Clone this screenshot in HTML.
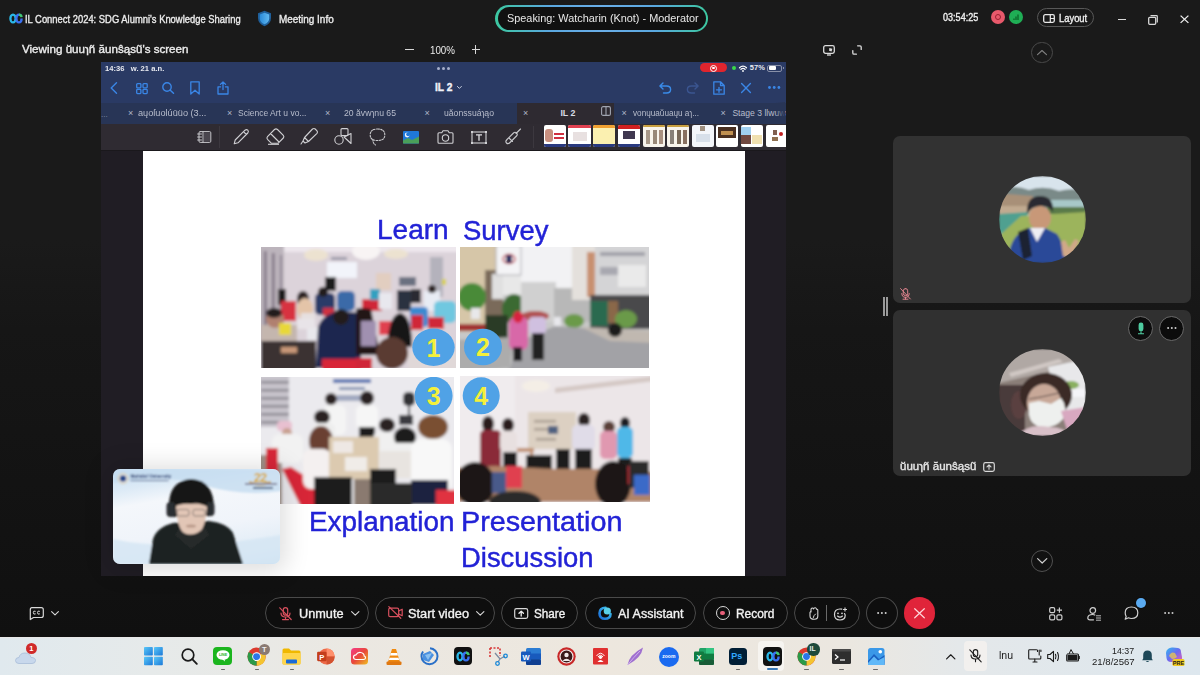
<!DOCTYPE html>
<html><head><meta charset="utf-8">
<style>
*{margin:0;padding:0;box-sizing:border-box}
html,body{width:1200px;height:675px;overflow:hidden}
body{position:relative;font-family:"Liberation Sans",sans-serif;background:linear-gradient(#1a1a1a 0,#1a1a1a 240px,#161616 330px,#111 585px,#101010 637px);color:#eee}
.a{position:absolute}
.t{position:absolute;white-space:nowrap;line-height:1;transform-origin:0 0}
.sb{-webkit-text-stroke:0.35px currentColor}
.pill{position:absolute;border:1.3px solid #4a4a4a;border-radius:17px;background:#0e0e0e;top:597px;height:32px}
svg{position:absolute;overflow:visible}
.ln{fill:none;stroke-linecap:round;stroke-linejoin:round}
</style></head><body>

<!-- ===== TOP BAR ===== -->
<svg style="left:9px;top:12.5px" width="14" height="11" viewBox="0 0 14 11">
  <ellipse cx="4" cy="5.5" rx="2.6" ry="3.9" fill="none" stroke="#2ab8e8" stroke-width="2.3"/>
  <path d="M12.2 2.8 Q11.2 1.6 10 1.6 Q7.4 1.6 7.4 5.5 Q7.4 9.4 10 9.4 Q12.6 9.4 12.6 5.5" fill="none" stroke="#3a70f0" stroke-width="2.3"/>
  <path d="M10 1.6 Q12.4 1.6 12.6 4.2" fill="none" stroke="#40c870" stroke-width="2.3"/>
</svg>
<div class="t sb" style="left:25px;top:13.6px;font-size:10.5px;color:#ececec;transform:scaleX(0.895)">IL Connect 2024: SDG Alumni's Knowledge Sharing</div>
<svg style="left:257px;top:10px" width="15" height="17" viewBox="0 0 15 17">
  <defs><linearGradient id="sh" x1="0" x2="1"><stop offset="0" stop-color="#2a8ad8"/><stop offset="1" stop-color="#60b8f0"/></linearGradient></defs>
  <path d="M7.5 0.8 L14 3.2 L14 8 Q14 13.5 7.5 16.2 Q1 13.5 1 8 L1 3.2 Z" fill="#1f5f9a"/>
  <path d="M7.5 2.8 L12.2 4.5 L12.2 8.2 Q12.2 12.3 7.5 14.3 Q2.8 12.3 2.8 8.2 L2.8 4.5 Z" fill="url(#sh)"/>
</svg>
<div class="t sb" style="left:279px;top:13.8px;font-size:10.5px;color:#ececec;transform:scaleX(0.946)">Meeting Info</div>

<div class="a" style="left:495px;top:4.5px;width:213px;height:27.5px;border-radius:14px;padding:2.5px;background:linear-gradient(90deg,#3cc8a0 0,#5aa8e0 25%,#6aaee8 50%,#5aa8e0 75%,#3cc8a0 100%)"><div style="width:100%;height:100%;border-radius:12px;background:#111"></div></div>
<div class="t" style="left:506.8px;top:13.3px;font-size:10.5px;color:#e8e8e8;transform:scaleX(1.035)">Speaking: Watcharin (Knot) - Moderator</div>

<div class="t sb" style="left:943px;top:13.2px;font-size:10.2px;color:#f0f0f0;transform:scaleX(0.89)">03:54:25</div>
<div class="a" style="left:990.6px;top:10.4px;width:14px;height:14px;border-radius:50%;background:#e8596b"></div>
<div class="a" style="left:994.6px;top:14.4px;width:6px;height:6px;border-radius:50%;border:1.4px solid #9a2030"></div>
<div class="a" style="left:1009.4px;top:10.4px;width:14px;height:14px;border-radius:50%;background:#1fae55"></div>
<svg style="left:1009.4px;top:10.4px" width="14" height="14"><path d="M5 10 V8.5 M7 10 V6.5 M9 10 V4.5" stroke="#0a6a2a" stroke-width="1.4"/></svg>
<div class="a" style="left:1036.5px;top:8.3px;width:57.5px;height:18.7px;border-radius:10px;border:1.2px solid #585858"></div>
<svg style="left:1043px;top:13.5px" width="12" height="9"><rect x="0.7" y="0.7" width="10.6" height="7.6" rx="1.5" fill="none" stroke="#e8e8e8" stroke-width="1.3"/><path d="M7.3 0.7 V8.3 M7.3 4.5 H11.3" stroke="#e8e8e8" stroke-width="1.2"/></svg>
<div class="t sb" style="left:1058.8px;top:13.7px;font-size:10.2px;color:#f0f0f0;transform:scaleX(0.922)">Layout</div>
<div class="a" style="left:1117.5px;top:19.2px;width:8.5px;height:1.3px;background:#d8d8d8"></div>
<svg style="left:1147.5px;top:14.5px" width="10" height="10"><rect x="0.7" y="2.3" width="7" height="7" rx="1" fill="none" stroke="#d8d8d8" stroke-width="1.3"/><path d="M2.5 0.7 H8.6 Q9.3 0.7 9.3 1.4 V7.5" fill="none" stroke="#d8d8d8" stroke-width="1.2"/></svg>
<svg style="left:1179.5px;top:14.7px" width="9" height="8.5"><path d="M0.6 0.6 L8.4 7.9 M8.4 0.6 L0.6 7.9" stroke="#f0f0f0" stroke-width="1.3"/></svg>

<!-- ===== second row ===== -->
<div class="t sb" style="left:22px;top:44px;font-size:10.5px;color:#ececec;transform:scaleX(1.105)">Viewing ŭuuɿñ ăunŝąsũ's screen</div>
<div class="a" style="left:405px;top:48.8px;width:8.7px;height:1.2px;background:#d8d8d8"></div>
<div class="t" style="left:430px;top:44.7px;font-size:10.8px;color:#ececec;transform:scaleX(0.905)">100%</div>
<div class="a" style="left:471.7px;top:48.8px;width:8.4px;height:1.2px;background:#d8d8d8"></div>
<div class="a" style="left:475.3px;top:45.2px;width:1.2px;height:8.5px;background:#d8d8d8"></div>
<svg style="left:823px;top:44.5px" width="12" height="11"><rect x="0.7" y="0.7" width="10.6" height="7.6" rx="1.8" fill="none" stroke="#dcdcdc" stroke-width="1.3"/><path d="M4 10 H8" stroke="#dcdcdc" stroke-width="1.3"/><path d="M6.3 3 L9.3 3.8 L8.6 6.6 L6.1 5.8Z" fill="#dcdcdc"/></svg>
<svg style="left:852px;top:44.5px" width="10" height="10"><path d="M5.6 0.8 H8 Q9.2 0.8 9.2 2 V4.4 M0.8 5.6 V8 Q0.8 9.2 2 9.2 H4.4" class="ln" stroke="#dcdcdc" stroke-width="1.3"/></svg>
<div class="a" style="left:1031.4px;top:41.8px;width:21.6px;height:21.6px;border-radius:50%;border:1.2px solid #4a4a4a"></div>
<svg style="left:1037px;top:50px" width="10" height="5"><path d="M0.5 4.7 L5 0.5 L9.5 4.7" class="ln" stroke="#808080" stroke-width="1.1"/></svg>

<!-- ===== SHARED SCREEN ===== -->
<div class="a" id="ipad" style="left:101px;top:62px;width:684.5px;height:513.7px;background:#201d24;overflow:hidden">
  <div class="a" style="left:0;top:0;width:685px;height:40.5px;background:#2a3a64"></div>
  <div class="a" style="left:0;top:40.5px;width:685px;height:21.5px;background:#283556"></div>
  <div class="a" style="left:416px;top:40.5px;width:97px;height:22px;background:#2e2a31"></div>
  <div class="a" style="left:0;top:62px;width:685px;height:26px;background:#2f2b32"></div><div class="a" style="left:0;top:88px;width:685px;height:1px;background:#1a181c"></div>
  <!-- page -->
  <div class="a" id="page" style="left:41.8px;top:89px;width:602.5px;height:426px;background:#fff"></div>
</div>
<!-- ipad status bar -->
<div class="t" style="left:104.5px;top:64.7px;font-size:7.2px;font-weight:700;color:#e8eaf0;transform:scaleX(1.057)">14:36&nbsp;&nbsp; w. 21 a.n.</div>
<svg style="left:437px;top:66.5px" width="13" height="3"><circle cx="1.5" cy="1.5" r="1.5" fill="#a8b0cc"/><circle cx="6.5" cy="1.5" r="1.5" fill="#a8b0cc"/><circle cx="11.5" cy="1.5" r="1.5" fill="#a8b0cc"/></svg>
<div class="a" style="left:699.6px;top:63px;width:27.4px;height:9.3px;border-radius:5px;background:#e0252e"></div>
<div class="a" style="left:710px;top:64.5px;width:7px;height:7px;border-radius:50%;border:1.2px solid #fff"></div>
<div class="a" style="left:712.3px;top:66.8px;width:2.4px;height:2.4px;border-radius:50%;background:#fff"></div>
<div class="a" style="left:731.5px;top:65.7px;width:4.6px;height:4.6px;border-radius:50%;background:#3ad84a"></div>
<svg style="left:738.7px;top:64.5px" width="8" height="7"><path d="M0.5 2.8 Q4 -0.6 7.5 2.8 M1.9 4.3 Q4 2.3 6.1 4.3" class="ln" stroke="#fff" stroke-width="1.2"/><circle cx="4" cy="6" r="0.9" fill="#fff"/></svg>
<div class="t" style="left:749.8px;top:64.3px;font-size:7.5px;font-weight:700;color:#e8eaf0">57%</div>
<div class="a" style="left:767.3px;top:64.5px;width:15px;height:7px;border-radius:2px;border:1px solid #8890a8"></div>
<div class="a" style="left:768.8px;top:66px;width:7.5px;height:4px;border-radius:1px;background:#fff"></div>
<div class="a" style="left:782.6px;top:66.8px;width:1.2px;height:2.5px;background:#8890a8"></div>
<!-- ipad toolbar icons -->
<svg style="left:110px;top:82px" width="8" height="12"><path d="M6.5 0.8 L1.2 6 L6.5 11.2" class="ln" stroke="#3a86e6" stroke-width="1.4"/></svg>
<svg style="left:135.5px;top:82.5px" width="12" height="11"><g fill="none" stroke="#3a86e6" stroke-width="1.3"><rect x="0.7" y="0.7" width="4.2" height="4.2" rx="0.8"/><rect x="7" y="0.7" width="4.2" height="4.2" rx="0.8"/><rect x="0.7" y="6.4" width="4.2" height="4.2" rx="0.8"/><rect x="7" y="6.4" width="4.2" height="4.2" rx="0.8"/></g></svg>
<svg style="left:161.8px;top:82px" width="13" height="12"><circle cx="5" cy="5" r="4.2" fill="none" stroke="#3a86e6" stroke-width="1.4"/><path d="M8 8 L11.5 11.3" class="ln" stroke="#3a86e6" stroke-width="1.5"/></svg>
<svg style="left:190.4px;top:81px" width="10" height="14"><path d="M0.8 0.8 H9.2 V13 L5 9.3 L0.8 13 Z" class="ln" stroke="#3a86e6" stroke-width="1.3"/></svg>
<svg style="left:216.7px;top:80.5px" width="12" height="14"><path d="M3.6 5.8 H1 V13 H11 V5.8 H8.4 M6 8.5 V0.9 M3.4 3.4 L6 0.9 L8.6 3.4" class="ln" stroke="#3a86e6" stroke-width="1.3"/></svg>
<div class="t sb" style="left:435px;top:83.3px;font-size:10.2px;font-weight:700;color:#f0f2f8">IL 2</div>
<svg style="left:457px;top:86.3px" width="5" height="3"><path d="M0.4 0.4 L2.4 2.4 L4.4 0.4" class="ln" stroke="#c8d0e0" stroke-width="1"/></svg>
<svg style="left:658.8px;top:82px" width="13" height="12"><path d="M4 0.9 L0.9 4 L4 7.1 M1 4 H7.5 Q11.6 4 11.6 7.5 Q11.6 11 7.5 11 H4.5" class="ln" stroke="#3a8be8" stroke-width="1.4"/></svg>
<svg style="left:685.6px;top:82px" width="13" height="12"><path d="M9 0.9 L12.1 4 L9 7.1 M12 4 H5.5 Q1.4 4 1.4 7.5 Q1.4 11 5.5 11 H8.5" class="ln" stroke="#3b5590" stroke-width="1.4"/></svg>
<svg style="left:713px;top:80.5px" width="12" height="14"><path d="M0.8 0.8 H7.5 L11.2 4.5 V13.2 H0.8 Z M7.5 0.8 V4.5 H11.2 M6 6.3 V11.3 M3.5 8.8 H8.5" class="ln" stroke="#3a86e6" stroke-width="1.3"/></svg>
<svg style="left:741px;top:82.7px" width="10" height="10"><path d="M0.6 0.6 L9.4 9.4 M9.4 0.6 L0.6 9.4" class="ln" stroke="#3a86e6" stroke-width="1.4"/></svg>
<svg style="left:767.5px;top:86.3px" width="13" height="3"><circle cx="1.5" cy="1.5" r="1.4" fill="#3a86e6"/><circle cx="6.2" cy="1.5" r="1.4" fill="#3a86e6"/><circle cx="10.9" cy="1.5" r="1.4" fill="#3a86e6"/></svg>
<!-- tabs -->
<div class="t" style="left:101px;top:111px;font-size:8px;color:#8890a8">...</div>
<div class="t" style="left:128px;top:108.5px;font-size:9px;color:#b0b6c8">×</div>
<div class="t" style="left:138px;top:109px;font-size:8.6px;color:#b8bdcc;transform:scaleX(1.068)">aųoſuolúūüo (3...</div>
<div class="t" style="left:227px;top:108.5px;font-size:9px;color:#b0b6c8">×</div>
<div class="t" style="left:237.6px;top:109px;font-size:8.6px;color:#b8bdcc;transform:scaleX(0.988)">Science Art u vo...</div>
<div class="t" style="left:325px;top:108.5px;font-size:9px;color:#b0b6c8">×</div>
<div class="t" style="left:344px;top:109px;font-size:8.6px;color:#b8bdcc;transform:scaleX(1.008)">20 ăvwɿnu 65</div>
<div class="t" style="left:424.5px;top:108.5px;font-size:9px;color:#b0b6c8">×</div>
<div class="t" style="left:444px;top:109px;font-size:8.6px;color:#b8bdcc;transform:scaleX(1.006)">uăonssuáɿąo</div>
<div class="t" style="left:523px;top:108.5px;font-size:9px;color:#b0b6c8">×</div>
<div class="t" style="left:560.4px;top:109px;font-size:8.8px;font-weight:700;color:#d8dce6">IL 2</div>
<svg style="left:601px;top:106px" width="10" height="10"><rect x="0.6" y="0.6" width="8.8" height="8.8" rx="1.5" fill="none" stroke="#a0a4b0" stroke-width="1.1"/><path d="M5 0.6 V9.4" stroke="#a0a4b0" stroke-width="1.1"/></svg>
<div class="t" style="left:621.5px;top:108.5px;font-size:9px;color:#b0b6c8">×</div>
<div class="t" style="left:633px;top:109px;font-size:8.6px;color:#b8bdcc;transform:scaleX(0.952)">vonųuaŭuaųu aɿ...</div>
<div class="t" style="left:720.5px;top:108.5px;font-size:9px;color:#b0b6c8">×</div>
<div class="t" style="left:732.4px;top:109px;font-size:8.6px;color:#b8bdcc">Stage 3 llwuwăw</div>
<div class="a" style="left:775px;top:102px;width:10px;height:22px;background:linear-gradient(90deg,rgba(40,53,86,0),#283556)"></div>
<!-- tools -->
<div class="a" style="left:219.4px;top:126px;width:0.8px;height:22px;background:#3c383f"></div>
<div class="a" style="left:533.3px;top:126px;width:0.8px;height:22px;background:#3c383f"></div>
<svg style="left:197px;top:130.5px" width="15" height="12"><g class="ln" stroke="#c8c8cc" stroke-width="1"><rect x="2" y="0.6" width="11.8" height="10.8" rx="1.2"/><path d="M0.6 3 H4.5 M0.6 6 H4.5 M0.6 9 H4.5 M6 0.6 V11.4"/></g><path d="M7 1.5 H13 V10.5 H7Z" fill="#4a464e"/></svg>
<svg style="left:233px;top:129px" width="16" height="16"><path d="M1.2 14.8 L2.2 11 L12 1.2 Q13.5 0 14.8 1.2 Q16 2.5 14.8 4 L5 13.8 Z M10.5 2.7 L13.3 5.5" class="ln" stroke="#d0d0d4" stroke-width="1.1"/></svg>
<svg style="left:266.3px;top:128px" width="19" height="17"><path d="M8.5 1.5 Q10 0.2 11.5 1.5 L17.3 7.3 Q18.5 8.8 17.3 10 L12 15.3 H5.5 L1.5 11.3 Q0.3 10 1.5 8.6 Z M4.5 5.5 L13 14" class="ln" stroke="#d0d0d4" stroke-width="1.1"/><path d="M2 16.3 H13" stroke="#d0d0d4" stroke-width="1.1"/></svg>
<svg style="left:300.3px;top:128px" width="18" height="17"><path d="M12.5 1 Q14 0 15.2 1 L17 2.8 Q18 4 17 5.3 L8.5 13.5 L4.5 9.5 Z M4.5 9.5 L3 13 L5 15 L8.5 13.5 M3 13 L1 16" class="ln" stroke="#d0d0d4" stroke-width="1.1"/></svg>
<svg style="left:334.3px;top:128px" width="18" height="17"><g class="ln" stroke="#d0d0d4" stroke-width="1.1"><rect x="7" y="0.6" width="7" height="7" rx="1"/><circle cx="5" cy="12" r="4.2"/><path d="M10 9 L17 5.5 V15.5 Z"/></g></svg>
<svg style="left:369px;top:127.5px" width="17" height="18"><path d="M8.5 1 Q15.8 1 15.8 7 Q15.8 12.5 8.5 12.5 Q1.2 12.5 1.2 7 Q1.2 1 8.5 1 M4 11.5 Q3.5 15 6.5 17" class="ln" stroke="#c8c8cc" stroke-width="1.1" stroke-dasharray="1.6 1.3"/></svg>
<svg style="left:402.5px;top:130.8px" width="16" height="13"><rect width="16" height="12.5" rx="1" fill="#1f78d8"/><path d="M0 12.5 V9.5 L5 7 L9 9 L16 5.5 V12.5Z" fill="#4aa05a"/><circle cx="4.2" cy="4" r="2.4" fill="#f0f4ff"/><circle cx="5.2" cy="3.2" r="2" fill="#1f78d8"/></svg>
<svg style="left:436.7px;top:130px" width="17" height="14"><path d="M1 3.8 Q1 2.8 2 2.8 H4.8 L6 0.8 H11 L12.2 2.8 H15 Q16 2.8 16 3.8 V12.2 Q16 13.2 15 13.2 H2 Q1 13.2 1 12.2 Z" class="ln" stroke="#d0d0d4" stroke-width="1.1"/><circle cx="8.5" cy="8" r="3.2" fill="none" stroke="#d0d0d4" stroke-width="1.1"/></svg>
<svg style="left:470.8px;top:130.8px" width="16" height="13"><rect x="1" y="1" width="14" height="11" fill="none" stroke="#d0d0d4" stroke-width="1.1"/><g fill="#d0d0d4"><rect x="0" y="0" width="2" height="2"/><rect x="14" y="0" width="2" height="2"/><rect x="0" y="11" width="2" height="2"/><rect x="14" y="11" width="2" height="2"/></g><path d="M5 3.8 H11 M8 3.8 V9.8" stroke="#e0e0e4" stroke-width="1.3"/></svg>
<svg style="left:505px;top:127.5px" width="16" height="18"><path d="M15.5 1 L11 5.5 M11.5 5 Q13 6.5 11.5 8 L5 14.5 Q3 16.5 1.5 15 Q0 13.5 2 11.5 L8.5 5 Q10 3.5 11.5 5 M4 10 L7.5 13.5" class="ln" stroke="#c8c8cc" stroke-width="1.1"/></svg>
<!-- thumbnails -->
<div class="a" style="left:544px;top:125px;width:22.2px;height:21.5px;border-radius:2px;background:#fff;overflow:hidden"><div class="a" style="left:0;top:19px;width:23px;height:3px;background:#2a3a80"></div><div class="a" style="left:1px;top:4px;width:8px;height:13px;background:#c89080;border-radius:3px"></div><div class="a" style="left:10px;top:8px;width:10px;height:2px;background:#d03040"></div><div class="a" style="left:10px;top:12px;width:10px;height:2px;background:#d03040"></div></div>
<div class="a" style="left:568.3px;top:125px;width:22.7px;height:21.5px;border-radius:2px;background:#fff;overflow:hidden"><div class="a" style="left:0;top:0;width:23px;height:3px;background:#e04050"></div><div class="a" style="left:0;top:19px;width:23px;height:3px;background:#2a3a80"></div><div class="a" style="left:5px;top:7px;width:14px;height:9px;background:#e8e0e0"></div></div>
<div class="a" style="left:593.3px;top:125px;width:22.2px;height:21.5px;border-radius:2px;background:#fbf0b0;overflow:hidden"><div class="a" style="left:0;top:0;width:23px;height:3px;background:#f0a030"></div><div class="a" style="left:0;top:19px;width:23px;height:3px;background:#2a3a80"></div></div>
<div class="a" style="left:617.6px;top:125px;width:22.8px;height:21.5px;border-radius:2px;background:#fff;overflow:hidden"><div class="a" style="left:0;top:0;width:23px;height:4px;background:#d02020"></div><div class="a" style="left:0;top:19px;width:23px;height:3px;background:#2a3a80"></div><div class="a" style="left:5px;top:6px;width:12px;height:8px;background:#403850"></div></div>
<div class="a" style="left:642.5px;top:125px;width:22.3px;height:21.5px;border-radius:2px;background:#f8f4ec;overflow:hidden"><div class="a" style="left:0;top:0;width:23px;height:2px;background:#c8a040"></div><div class="a" style="left:3px;top:5px;width:4px;height:14px;background:#a89888"></div><div class="a" style="left:10px;top:5px;width:4px;height:14px;background:#988878"></div><div class="a" style="left:16px;top:5px;width:4px;height:14px;background:#a89080"></div></div>
<div class="a" style="left:667px;top:125px;width:22.3px;height:21.5px;border-radius:2px;background:#f8f4ec;overflow:hidden"><div class="a" style="left:0;top:0;width:23px;height:2px;background:#c8a040"></div><div class="a" style="left:3px;top:5px;width:4px;height:14px;background:#888078"></div><div class="a" style="left:10px;top:5px;width:4px;height:14px;background:#786858"></div><div class="a" style="left:16px;top:5px;width:4px;height:14px;background:#887060"></div></div>
<div class="a" style="left:692px;top:125px;width:22.2px;height:21.5px;border-radius:2px;background:#f4f6fa;overflow:hidden"><div class="a" style="left:8px;top:1px;width:5px;height:5px;background:#a09080"></div><div class="a" style="left:4px;top:9px;width:14px;height:8px;background:#d8e0ea"></div></div>
<div class="a" style="left:716.3px;top:125px;width:22.2px;height:21.5px;border-radius:2px;background:#fff;overflow:hidden"><div class="a" style="left:2px;top:2px;width:18px;height:11px;background:#4a3020"></div><div class="a" style="left:5px;top:6px;width:12px;height:4px;background:#c09050"></div></div>
<div class="a" style="left:741.3px;top:125px;width:22.2px;height:21.5px;border-radius:2px;background:#fff;overflow:hidden"><div class="a" style="left:0;top:2px;width:10px;height:8px;background:#a0d0f0"></div><div class="a" style="left:0;top:10px;width:10px;height:9px;background:#704840"></div><div class="a" style="left:11px;top:10px;width:10px;height:9px;background:#f0e0b0"></div></div>
<div class="a" style="left:765.6px;top:125px;width:22px;height:21.5px;border-radius:2px;background:#fff;overflow:hidden"><div class="a" style="left:7px;top:5px;width:4px;height:5px;background:#806050"></div><div class="a" style="left:13px;top:7px;width:4px;height:4px;border-radius:50%;background:#c02020"></div><div class="a" style="left:6px;top:12px;width:6px;height:4px;background:#907050"></div></div>
<div class="a" style="left:785.5px;top:62px;width:20px;height:90px;background:#1a1a1a"></div>

<!-- ===== SLIDE ===== -->
<svg width="0" height="0" style="position:absolute"><defs>
<filter id="bl" x="-5%" y="-5%" width="110%" height="110%"><feGaussianBlur stdDeviation="1.6"/></filter>
<filter id="bl2" x="-5%" y="-5%" width="110%" height="110%"><feGaussianBlur stdDeviation="0.8"/></filter>
</defs></svg>
<div class="t" style="left:377.3px;top:216.7px;font-size:27px;color:#2222d6;-webkit-text-stroke:0.45px #2222d6;transform:scaleX(1.038)">Learn</div>
<div class="t" style="left:463.2px;top:217.9px;font-size:27px;color:#2222d6;-webkit-text-stroke:0.45px #2222d6;transform:scaleX(1.017)">Survey</div>
<div class="t" style="left:308.7px;top:509.2px;font-size:27px;color:#2222d6;-webkit-text-stroke:0.45px #2222d6;transform:scaleX(1.031)">Explanation</div>
<div class="t" style="left:460.8px;top:509.2px;font-size:27px;color:#2222d6;-webkit-text-stroke:0.45px #2222d6;transform:scaleX(1.065)">Presentation</div>
<div class="t" style="left:460.6px;top:545.2px;font-size:27px;color:#2222d6;-webkit-text-stroke:0.45px #2222d6;transform:scaleX(1.015)">Discussion</div>

<!-- photo 1 -->
<svg style="left:261px;top:247px" width="195" height="121" viewBox="0 0 195 121">
<clipPath id="c1"><rect width="195" height="121"/></clipPath>
<g clip-path="url(#c1)"><g filter="url(#bl)">
<rect x="-5" y="-5" width="205" height="135" fill="#dcd3da"/>
<rect x="-5" y="-5" width="205" height="10" fill="#eee8ee"/>
<ellipse cx="105" cy="4" rx="14" ry="9" fill="#f8f4f4"/>
<ellipse cx="55" cy="8" rx="12" ry="6" fill="#ece2d0"/><ellipse cx="135" cy="7" rx="12" ry="5" fill="#ece2d0"/>
<rect x="-5" y="-5" width="28" height="100" fill="#bcb4bc"/>
<rect x="3" y="4" width="2.5" height="80" fill="#7a7080"/><rect x="11" y="6" width="2.5" height="80" fill="#7a7080"/><rect x="19" y="8" width="2" height="80" fill="#8a8090"/>
<rect x="66" y="15" width="30" height="16" fill="#f2f4fa"/>
<rect x="70" y="10" width="16" height="3" fill="#9a98a8"/>
<rect x="169" y="10" width="13" height="40" fill="#b4b2bc"/>
<rect x="115" y="26" width="15" height="17" fill="#e2cec0"/>
<rect x="138" y="30" width="17" height="9" fill="#6a7080"/>
<rect x="181" y="32" width="4" height="6" fill="#d8d040"/>
<rect x="64" y="30" width="11" height="14" fill="#1c1a1e"/>
<ellipse cx="42" cy="52" rx="6" ry="8" fill="#2a2020"/>
<rect x="17" y="42" width="8" height="16" fill="#1a1a1a"/>
<rect x="20" y="54" width="15" height="20" fill="#d83040"/>
<ellipse cx="44" cy="62" rx="8" ry="11" fill="#e4c4a8"/>
<rect x="40" y="66" width="14" height="12" fill="#e6e0e0"/>
<rect x="54" y="46" width="20" height="22" rx="5" fill="#2a3a68"/>
<ellipse cx="62" cy="45" rx="5" ry="5" fill="#201a1a"/>
<rect x="62" y="61" width="11" height="8" fill="#d03040"/>
<rect x="76" y="44" width="18" height="20" rx="5" fill="#3a6aa8"/>
<rect x="101" y="52" width="20" height="12" fill="#d02838"/>
<rect x="109" y="42" width="10" height="11" fill="#30a0c0"/>
<rect x="118" y="46" width="13" height="16" fill="#e8e8ee"/>
<rect x="136" y="43" width="14" height="21" fill="#2a3040"/>
<rect x="150" y="42" width="10" height="14" fill="#2a2a30"/>
<rect x="163" y="44" width="16" height="20" fill="#e8ecf4"/><ellipse cx="171" cy="42" rx="4" ry="4" fill="#2a2020"/>
<rect x="149" y="60" width="18" height="20" rx="4" fill="#3a8ad0"/>
<rect x="173" y="54" width="22" height="22" rx="5" fill="#70c8e0"/>
<rect x="150" y="68" width="12" height="15" fill="#d02838"/>
<rect x="167" y="70" width="16" height="12" fill="#d02838"/>
<rect x="0" y="78" width="36" height="36" fill="#c4b6ae"/>
<ellipse cx="14" cy="72" rx="9" ry="9" fill="#b08070"/>
<ellipse cx="13" cy="66" rx="8" ry="5" fill="#201a1a"/>
<rect x="18" y="76" width="12" height="12" fill="#e8d838"/>
<rect x="46" y="80" width="26" height="13" fill="#e8e8ec"/>
<rect x="36" y="72" width="18" height="10" fill="#e8e4e8"/>
<rect x="0" y="94" width="55" height="30" fill="#3a3030"/>
<rect x="20" y="100" width="16" height="6" fill="#c89878"/>
<path d="M55 121 L57 80 Q62 66 80 64 L100 66 L100 121Z" fill="#1e2850"/>
<ellipse cx="80" cy="70" rx="8" ry="8" fill="#221c1c"/>
<path d="M95 62 Q98 60 110 62 L119 108 L95 108Z" fill="#201818"/>
<rect x="100" y="74" width="15" height="25" fill="#a090b0"/>
<rect x="118" y="74" width="15" height="14" fill="#e04050"/>
<path d="M126 100 Q128 66 140 66 Q151 70 151 100Z" fill="#181818"/>
<ellipse cx="131" cy="106" rx="16" ry="16" fill="#5a3a30"/>
<rect x="61" y="112" width="39" height="12" fill="#d82838"/>
<rect x="95" y="111" width="16" height="12" fill="#d02838"/>
<rect x="147" y="105" width="50" height="18" fill="#e0d8d8"/>
</g>
<ellipse cx="172.5" cy="100.3" rx="21.2" ry="18.7" fill="#50a2e6"/>
<text x="172.5" y="109.5" font-size="25" font-weight="700" text-anchor="middle" fill="#f4f03a" font-family="Liberation Sans">1</text>
</g></svg>

<!-- photo 2 -->
<svg style="left:460px;top:247px" width="189" height="121" viewBox="0 0 189 121">
<clipPath id="c2"><rect width="189" height="121"/></clipPath>
<g clip-path="url(#c2)"><g filter="url(#bl)">
<rect x="-5" y="-5" width="200" height="135" fill="#c8c8c8"/>
<rect x="58" y="-5" width="72" height="52" fill="#f2f2f4"/>
<rect x="-5" y="-5" width="45" height="90" fill="#d6c6a8"/>
<rect x="25" y="23" width="18" height="52" fill="#7a6a5a"/>
<rect x="32" y="27" width="11" height="25" fill="#e0e0e0"/>
<rect x="43" y="27" width="18" height="21" fill="#e8e8e8"/>
<rect x="36" y="-2" width="25" height="30" fill="#f4f4f6"/>
<rect x="36" y="-2" width="25" height="30" fill="none" stroke="#9a9aa0" stroke-width="0.8"/>
<ellipse cx="49" cy="12" rx="6" ry="4.5" fill="none" stroke="#c03848" stroke-width="1.5"/><rect x="46" y="8" width="6" height="8" fill="#1a2a60"/>
<ellipse cx="12" cy="50" rx="14" ry="14" fill="#4a8a38"/>
<rect x="11" y="61" width="9" height="11" fill="#e8e8ea"/>
<rect x="-5" y="77" width="30" height="7" fill="#a03030"/>
<ellipse cx="54" cy="62" rx="12" ry="15" fill="#3a6a30"/>
<rect x="25" y="68" width="23" height="29" fill="#2a3a28"/>
<rect x="61" y="35" width="35" height="40" fill="#d0d0d0"/>
<rect x="94" y="41" width="36" height="34" fill="#b8b8b8"/>
<rect x="112" y="-5" width="25" height="58" fill="#e4e0dc"/>
<rect x="127" y="5" width="9" height="45" fill="#c89070"/>
<rect x="135" y="-5" width="60" height="55" fill="#d4d4d6"/>
<rect x="140" y="5" width="45" height="4" fill="#a0a0a8"/><rect x="140" y="20" width="20" height="8" fill="#a8a8b0"/>
<rect x="158" y="18" width="28" height="22" fill="#eaeaea"/>
<rect x="130" y="48" width="65" height="34" fill="#4a4a4c"/>
<rect x="130" y="54" width="18" height="25" fill="#2a6a50"/>
<rect x="148" y="54" width="10" height="22" fill="#8a6848"/>
<ellipse cx="166" cy="72" rx="11" ry="9" fill="#6a9a48"/>
<ellipse cx="114" cy="74" rx="10" ry="7" fill="#6a9a48"/>
<rect x="94" y="70" width="7" height="9" fill="#e8e8ec"/>
<polygon points="50,121 58,95 95,79 121,81 195,92 195,125 45,125" fill="#a2a2a6"/>
<polygon points="-5,93 54,90 50,121 -5,125" fill="#acacac"/>
<polygon points="121,80 195,84 195,96 150,94" fill="#c0b8b0"/>
<ellipse cx="155" cy="83" rx="7" ry="7" fill="#1a1a1a"/>
<ellipse cx="75" cy="69" rx="14" ry="5" fill="#b05050"/>
<rect x="49" y="70" width="19" height="33" rx="6" fill="#d868a8"/>
<ellipse cx="58" cy="70" rx="5" ry="6" fill="#d82040"/>
<rect x="53" y="100" width="9" height="14" fill="#1e1e1e"/>
<rect x="69" y="70" width="17" height="17" rx="4" fill="#d0c0e0"/>
<rect x="72" y="86" width="12" height="27" fill="#222"/>
</g>
<ellipse cx="23" cy="100" rx="19" ry="18.3" fill="#50a2e6"/>
<text x="23" y="109.3" font-size="25" font-weight="700" text-anchor="middle" fill="#f4f03a" font-family="Liberation Sans">2</text>
</g></svg>

<!-- photo 3 -->
<svg style="left:261px;top:377px" width="193" height="127" viewBox="0 0 193 127">
<clipPath id="c3"><rect width="193" height="127"/></clipPath>
<g clip-path="url(#c3)"><g filter="url(#bl)">
<rect x="-5" y="-5" width="205" height="140" fill="#ebeaee"/>
<rect x="-5" y="-2" width="33" height="52" fill="#c8c4cc"/>
<rect x="0" y="4" width="28" height="2.5" fill="#8a8690"/><rect x="0" y="12" width="28" height="2.5" fill="#8a8690"/><rect x="0" y="20" width="28" height="2.5" fill="#8a8690"/><rect x="0" y="28" width="28" height="2.5" fill="#8a8690"/><rect x="0" y="36" width="28" height="2.5" fill="#8a8690"/><rect x="0" y="44" width="28" height="2.5" fill="#8a8690"/>
<rect x="-5" y="78" width="26" height="52" fill="#a09088"/>
<rect x="72" y="2" width="38" height="4" fill="#5070b0"/><rect x="78" y="10" width="26" height="3" fill="#8090b0"/><rect x="76" y="18" width="30" height="6" fill="#a0a8c0"/>
<rect x="142" y="15" width="12" height="14" rx="5" fill="#303036"/><rect x="147" y="28" width="2" height="20" fill="#2a2a30"/>
<rect x="138" y="38" width="14" height="10" fill="#3a3a40"/>
<ellipse cx="70" cy="22" rx="6" ry="6" fill="#2a2020"/><rect x="63" y="28" width="22" height="30" rx="6" fill="#f4f4f4"/>
<ellipse cx="106" cy="21" rx="7" ry="7" fill="#2a2020"/><rect x="95" y="28" width="22" height="24" rx="6" fill="#f6f6f6"/><rect x="98" y="50" width="16" height="22" fill="#1c1c1c"/>
<ellipse cx="61" cy="40" rx="8" ry="7" fill="#2a2424"/><rect x="52" y="46" width="22" height="20" rx="6" fill="#eeeeee"/>
<ellipse cx="126" cy="48" rx="8" ry="7" fill="#2a2424"/><rect x="112" y="55" width="22" height="20" rx="6" fill="#f0f0f0"/>
<ellipse cx="172" cy="50" rx="15" ry="12" fill="#7a5030"/>
<rect x="16" y="44" width="15" height="10" rx="4" fill="#e8c0d0"/><ellipse cx="26" cy="56" rx="5" ry="5" fill="#c8a090"/>
<rect x="11" y="57" width="31" height="29" rx="8" fill="#f2f2f2"/>
<rect x="5" y="71" width="12" height="32" fill="#d82838"/>
<polygon points="21,92 30,90 77,120 77,130 40,130" fill="#d82838"/>
<ellipse cx="60" cy="64" rx="12" ry="15" fill="#6a4030"/>
<rect x="42" y="72" width="28" height="40" rx="8" fill="#f4f0f0"/>
<rect x="68" y="60" width="50" height="42" fill="#dccab0"/>
<rect x="72" y="64" width="20" height="12" fill="#eee8e4"/><rect x="84" y="80" width="22" height="14" fill="#f0ece8"/>
<rect x="53" y="100" width="38" height="30" fill="#1c1c1c"/>
<ellipse cx="144" cy="60" rx="11" ry="10" fill="#1a1a1a"/><rect x="131" y="66" width="29" height="15" fill="#f0f0f0"/>
<rect x="119" y="74" width="33" height="27" fill="#e8e4e0"/>
<rect x="150" y="62" width="41" height="54" rx="10" fill="#f8f8f8"/>
<rect x="150" y="103" width="37" height="25" fill="#1a2040"/>
<rect x="109" y="92" width="26" height="24" fill="#1a1a1a"/>
<rect x="106" y="106" width="45" height="24" fill="#2a2a2a"/>
<rect x="93" y="102" width="16" height="28" fill="#8a7a70"/>
<rect x="175" y="113" width="22" height="16" fill="#e03040"/>
</g>
<ellipse cx="172.6" cy="18.8" rx="19" ry="19" fill="#50a2e6"/>
<text x="172.6" y="28" font-size="25" font-weight="700" text-anchor="middle" fill="#f4f03a" font-family="Liberation Sans">3</text>
</g></svg>

<!-- photo 4 -->
<svg style="left:460px;top:376px" width="190" height="126" viewBox="0 0 190 126">
<clipPath id="c4"><rect width="190" height="126"/></clipPath>
<g clip-path="url(#c4)"><g filter="url(#bl)">
<rect x="-5" y="-5" width="200" height="140" fill="#ece6e8"/>
<rect x="-5" y="-5" width="60" height="100" fill="#f0ecee"/>
<polygon points="95,12 195,0 195,5 95,17" fill="#d4c8c4"/>
<ellipse cx="76" cy="10" rx="14" ry="6" fill="#f4eee6"/>
<rect x="68" y="36" width="48" height="37" fill="#dcd0c2"/>
<rect x="74" y="44" width="22" height="2.5" fill="#a89c90"/><rect x="74" y="52" width="18" height="2.5" fill="#a89c90"/><rect x="76" y="62" width="20" height="2.5" fill="#a89c90"/>
<rect x="88" y="50" width="10" height="8" fill="#506080"/>
<ellipse cx="28" cy="48" rx="6" ry="8" fill="#2a1e1e"/>
<rect x="20" y="54" width="21" height="41" rx="5" fill="#8a2a38"/>
<ellipse cx="48" cy="49" rx="6" ry="7" fill="#2a1e1e"/>
<rect x="40" y="55" width="17" height="21" rx="5" fill="#e8e0e0"/>
<rect x="43" y="76" width="14" height="29" fill="#1c1c1c"/>
<rect x="57" y="72" width="17" height="4" fill="#c09070"/><rect x="70" y="74" width="3" height="24" fill="#c09070"/>
<rect x="66" y="79" width="26" height="15" fill="#1e1e1e"/>
<ellipse cx="124" cy="44" rx="6" ry="7" fill="#2a2220"/>
<rect x="112" y="49" width="23" height="25" rx="5" fill="#e0dce8"/>
<rect x="115" y="73" width="17" height="32" fill="#1a1a1e"/>
<rect x="96" y="73" width="14" height="22" fill="#1a1a1a"/>
<ellipse cx="149" cy="51" rx="6" ry="6" fill="#5a4038"/>
<rect x="140" y="55" width="17" height="28" rx="5" fill="#e098b0"/>
<ellipse cx="165" cy="47" rx="5" ry="6" fill="#1e1e20"/>
<rect x="157" y="51" width="16" height="31" rx="5" fill="#50b8e8"/>
<rect x="158" y="82" width="14" height="18" fill="#1a1a1a"/>
<polygon points="-5,126 -5,92 34,90 95,93 140,93 195,96 195,126" fill="#b08468"/>
<ellipse cx="15" cy="108" rx="20" ry="22" fill="#1a1818"/>
<rect x="32" y="96" width="14" height="21" fill="#4a5a8a"/>
<rect x="46" y="90" width="16" height="22" fill="#e04050"/>
<ellipse cx="55" cy="126" rx="26" ry="11" fill="#2a2a2a"/>
<ellipse cx="153" cy="108" rx="18" ry="23" fill="#1a1818"/>
<rect x="168" y="90" width="9" height="18" fill="#d03040"/>
<rect x="169" y="85" width="20" height="27" fill="#2a2a2a"/>
<rect x="174" y="99" width="16" height="20" fill="#3a6ac8"/>
</g>
<ellipse cx="21.2" cy="19.8" rx="18.5" ry="18.5" fill="#50a2e6"/>
<text x="21.2" y="29" font-size="25" font-weight="700" text-anchor="middle" fill="#f4f03a" font-family="Liberation Sans">4</text>
</g></svg>

<!-- self view -->
<div class="a" style="left:112.7px;top:469.4px;width:167.8px;height:94.2px;border-radius:7px;overflow:hidden;box-shadow:0 2px 24px 6px rgba(0,0,0,0.13);background:linear-gradient(170deg,#c8def2 0,#dceaf6 18%,#f4f7fb 32%,#f0f4fa 60%,#e0ecf6 85%,#c8dff0 100%)">
<svg style="left:0;top:0" width="168" height="95" viewBox="0 0 168 95">
<g filter="url(#bl2)">
<path d="M0 14 Q50 4 90 16 Q130 28 168 22 V0 H0Z" fill="#c4dcf0" opacity="0.8"/>
<path d="M0 70 Q60 84 168 66 V95 H0Z" fill="#d4e6f4" opacity="0.8"/>
<circle cx="10" cy="9.5" r="5" fill="#f0f2f6" stroke="#c8a860" stroke-width="0.6"/><circle cx="10" cy="9.5" r="3.3" fill="#2a4a8a"/>
<text x="17.5" y="9.3" font-size="4.6" font-weight="700" fill="#2a3a6a" font-family="Liberation Sans">Mahidol University</text>
<rect x="17.5" y="10.8" width="38" height="1.3" fill="#7a8aa8"/>
<text x="147" y="13" font-size="13" font-weight="700" text-anchor="middle" fill="#d8a838" font-family="Liberation Sans" letter-spacing="-1">22</text><path d="M136 12 Q147 16 158 12 L157 15 Q147 18 137 15Z" fill="#c89828"/>
<rect x="132" y="14" width="32" height="2" fill="#8a8aa0"/>
<rect x="140" y="18" width="20" height="1.8" fill="#4a5a7a"/>
<path d="M36 95 L40 70 Q44 58 60 54 L96 52 Q114 54 120 64 L130 95Z" fill="#1e2323"/>
<path d="M56 42 Q54 12 78 10 Q101 11 101 40 L99 47 L57 48Z" fill="#151515"/>
<rect x="53.5" y="33" width="9" height="15" rx="4" fill="#2c2e30"/><rect x="93" y="33" width="8.5" height="14" rx="4" fill="#2c2e30"/>
<path d="M63 36 Q64 66 78 69 Q93 66 94 36 Q86 32 78 33 Q70 32 63 36Z" fill="#e2c6b6"/>
<path d="M61 38 Q66 26 80 27 Q92 28 95 38 Q86 33 78 35 Q68 34 61 38Z" fill="#151515"/>
<rect x="64" y="40.5" width="12" height="6.5" rx="2" fill="none" stroke="#807470" stroke-width="0.9"/><rect x="80" y="40.5" width="12" height="6.5" rx="2" fill="none" stroke="#807470" stroke-width="0.9"/>
<path d="M66 60 Q78 72 92 58 L96 66 L78 80 L62 66Z" fill="#262a2a"/>
<ellipse cx="78" cy="57" rx="5" ry="1.5" fill="#b89888"/>
</g></svg>
</div>

<!-- ===== RIGHT PANEL ===== -->
<div class="a" style="left:892.8px;top:136.3px;width:298.2px;height:167px;border-radius:7px;background:#323232"></div>
<div class="a" style="left:892.8px;top:310.2px;width:298.2px;height:166.3px;border-radius:7px;background:#303030"></div>
<svg style="left:998.5px;top:175.7px" width="87" height="87" viewBox="0 0 87 87">
<clipPath id="av1"><circle cx="43.5" cy="43.5" r="43.5"/></clipPath>
<g clip-path="url(#av1)" filter="url(#bl2)">
<rect width="87" height="87" fill="#d8e4ec"/>
<path d="M0 14 Q15 8 30 14 Q45 9 60 15 Q75 11 87 16 V32 H0Z" fill="#7a8a88"/>
<rect x="50" y="24" width="37" height="10" fill="#a8c8c8"/>
<rect x="48" y="31" width="39" height="7" fill="#5a7a48"/>
<polygon points="0,22 8,18 34,20 34,38 0,40" fill="#a89078"/>
<rect x="0" y="30" width="34" height="9" fill="#c0aa90"/>
<polygon points="0,38 30,36 20,55 0,58" fill="#50a090"/>
<polygon points="0,60 22,40 87,36 87,87 0,87" fill="#9cb45c"/>
<ellipse cx="41" cy="42" rx="11" ry="12" fill="#c89878"/>
<path d="M28 38 Q27 20 41 20 Q55 20 54 36 Q50 29 41 30 Q33 30 28 38Z" fill="#2a2a30"/>
<path d="M9 87 Q10 64 22 56 L30 52 L46 52 L58 58 Q64 66 68 87Z" fill="#2a4a98"/>
<polygon points="31,52 38,66 46,52" fill="#eeeef4"/>
<polygon points="19,56 29,52 33,80 24,84" fill="#1e2230"/>
<path d="M64 80 L62 66 L66 64 L70 72 L76 63 L80 65 L72 82Z" fill="#d0a888"/>
</g></svg>
<svg style="left:998.5px;top:349px" width="87" height="87" viewBox="0 0 87 87">
<clipPath id="av2"><circle cx="43.5" cy="43.5" r="43.5"/></clipPath>
<g clip-path="url(#av2)" filter="url(#bl2)">
<rect width="87" height="87" fill="#8a7e78"/>
<polygon points="0,0 87,0 87,14 0,34" fill="#b0a8a4"/>
<polygon points="10,24 60,10 64,13 12,28" fill="#d0c8c4"/>
<polygon points="49,18 87,10 87,60 60,62" fill="#e8e8ea"/>
<ellipse cx="72" cy="36" rx="8" ry="4" fill="#8ab060"/>
<rect x="72" y="40" width="14" height="8" fill="#f4f4f8"/>
<rect x="0" y="36" width="26" height="51" fill="#4a3a3a"/>
<ellipse cx="20" cy="56" rx="8" ry="14" fill="#5a4040"/>
<ellipse cx="47" cy="46" rx="26" ry="22" fill="#3a2a28"/>
<ellipse cx="45" cy="54" rx="17" ry="19" fill="#c8a898"/>
<path d="M30 54 L40 52 L52 55 L62 49 Q69 58 64 70 Q55 80 42 78 Q32 76 30 66Z" fill="#eef0ee"/>
<path d="M30 50 L42 48 L60 44" fill="none" stroke="#5a4a48" stroke-width="1"/>
<polygon points="62,62 87,58 87,87 70,87" fill="#d8a8c0"/>
<path d="M18 87 Q30 74 50 78 Q65 78 72 87Z" fill="#d8c0c8"/>
</g></svg>

<!-- right panel controls -->
<svg style="left:900px;top:287.5px" width="11" height="12"><g class="ln" stroke="#e0848e" stroke-width="1"><rect x="3.3" y="0.6" width="4.4" height="7" rx="2.2"/><path d="M1.8 5.5 Q1.8 9.3 5.5 9.3 Q9.2 9.3 9.2 5.5 M5.5 9.3 V11.2 M3 11.2 H8 M0.6 0.6 L10.4 11"/></g></svg>
<div class="a" style="left:883.2px;top:297px;width:1.5px;height:19px;background:#9a9a9a"></div>
<div class="a" style="left:886.3px;top:297px;width:1.5px;height:19px;background:#9a9a9a"></div>
<div class="a" style="left:1128px;top:316px;width:25px;height:25px;border-radius:50%;border:1.3px solid #6a6a6a;background:#0c0c0c"></div>
<svg style="left:1136px;top:322px" width="10" height="13"><rect x="2.6" y="0.5" width="4.8" height="9" rx="2.4" fill="#4ecca0"/><path d="M5 9.5 V11.5 M2 11.8 H8" stroke="#4ecca0" stroke-width="1.1"/></svg>
<div class="a" style="left:1159.2px;top:316px;width:25px;height:25px;border-radius:50%;border:1.3px solid #6a6a6a;background:#0c0c0c"></div>
<svg style="left:1167px;top:327.3px" width="10" height="3"><circle cx="1.1" cy="1.1" r="1" fill="#cfcfcf"/><circle cx="4.8" cy="1.1" r="1" fill="#cfcfcf"/><circle cx="8.5" cy="1.1" r="1" fill="#cfcfcf"/></svg>
<div class="t sb" style="left:900px;top:461px;font-size:10.5px;color:#e6e6e6;transform:scaleX(1.1)">ŭuuɿñ ăunŝąsũ</div>
<svg style="left:983px;top:461.8px" width="12" height="10"><rect x="0.7" y="0.7" width="10.6" height="8.6" rx="1.8" fill="none" stroke="#d8d8d8" stroke-width="1.2"/><path d="M6 7.3 V3 M4 4.8 L6 2.8 L8 4.8" class="ln" stroke="#d8d8d8" stroke-width="1.1"/></svg>
<div class="a" style="left:1031.2px;top:549.5px;width:22px;height:22px;border-radius:50%;border:1.2px solid #505050"></div>
<svg style="left:1037.2px;top:557.8px" width="10.5" height="5.5"><path d="M0.6 0.6 L5.2 5 L9.8 0.6" class="ln" stroke="#d0d0d0" stroke-width="1.2"/></svg>

<!-- ===== CONTROL BAR ===== -->
<svg style="left:29px;top:607px" width="15" height="13"><path d="M2.5 0.7 H12.3 Q14.3 0.7 14.3 2.7 V8.5 Q14.3 10.5 12.3 10.5 H4.5 L1.3 12.5 L1.3 2.7 Q1.3 0.7 3 0.7Z" class="ln" stroke="#d8d8d8" stroke-width="1.2"/><path d="M6.3 4.2 Q4.3 3.2 4.3 5.6 Q4.3 8 6.3 7 M10.5 4.2 Q8.5 3.2 8.5 5.6 Q8.5 8 10.5 7" class="ln" stroke="#d8d8d8" stroke-width="1"/></svg>
<svg style="left:50.9px;top:610.8px" width="8" height="4.5"><path d="M0.6 0.6 L4 3.9 L7.4 0.6" class="ln" stroke="#d8d8d8" stroke-width="1.1"/></svg>

<div class="pill" style="left:265px;width:104px"></div>
<svg style="left:279px;top:606.5px" width="13" height="13.5"><g class="ln" stroke="#d8505e" stroke-width="1.2"><rect x="4.3" y="0.7" width="4.4" height="7.4" rx="2.2"/><path d="M2 6 Q2 10 6.5 10 Q11 10 11 6 M6.5 10 V12.6 M3.5 12.6 H9.5 M0.8 0.8 L12.2 12.5"/></g></svg>
<div class="t sb" style="left:298.5px;top:607.6px;font-size:12px;color:#f2f2f2;transform:scaleX(1.059)">Unmute</div>
<svg style="left:351px;top:611px" width="8.5" height="5"><path d="M0.6 0.6 L4.25 4.2 L7.9 0.6" class="ln" stroke="#d8d8d8" stroke-width="1.1"/></svg>

<div class="pill" style="left:375.2px;width:119.4px"></div>
<svg style="left:388.2px;top:606.3px" width="15" height="13"><g class="ln" stroke="#d8505e" stroke-width="1.2"><rect x="0.7" y="2.2" width="10" height="8.5" rx="1.5"/><path d="M10.7 5 L14.2 3.2 V9.7 L10.7 8 M0.8 0.6 L12.8 12.3"/></g></svg>
<div class="t sb" style="left:408.3px;top:607.6px;font-size:12px;color:#f2f2f2;transform:scaleX(1.063)">Start video</div>
<svg style="left:476.4px;top:611px" width="8.5" height="5"><path d="M0.6 0.6 L4.25 4.2 L7.9 0.6" class="ln" stroke="#d8d8d8" stroke-width="1.1"/></svg>

<div class="pill" style="left:501px;width:77px"></div>
<svg style="left:514.1px;top:608px" width="14.5" height="11"><rect x="0.7" y="0.7" width="13" height="9.6" rx="1.8" fill="none" stroke="#d8d8d8" stroke-width="1.2"/><path d="M7.2 8 V3.3 M5 5.3 L7.2 3.1 L9.4 5.3" class="ln" stroke="#f0f0f0" stroke-width="1.3"/></svg>
<div class="t sb" style="left:533.9px;top:607.6px;font-size:12px;color:#f2f2f2;transform:scaleX(0.974)">Share</div>

<div class="pill" style="left:584.5px;width:111.5px"></div>
<svg style="left:598px;top:606px" width="14.5" height="14"><defs><linearGradient id="ai" x1="0" y1="1" x2="1" y2="0"><stop offset="0" stop-color="#1a6ad8"/><stop offset="1" stop-color="#40c8f0"/></linearGradient></defs><path d="M7.5 1.8 Q1.5 1.8 1.5 7.3 Q1.5 12.8 7 12.8 Q12.5 12.8 12.5 8" fill="none" stroke="url(#ai)" stroke-width="2.6" stroke-linecap="round"/><circle cx="9.3" cy="5" r="3.6" fill="#5ad0e8"/></svg>
<div class="t sb" style="left:617.8px;top:607.6px;font-size:12px;color:#f2f2f2;transform:scaleX(1.043)">AI Assistant</div>

<div class="pill" style="left:702.5px;width:85px"></div>
<div class="a" style="left:715.5px;top:605.8px;width:14px;height:14px;border-radius:50%;border:1.4px solid #d8d8d8"></div>
<div class="a" style="left:720.2px;top:610.5px;width:4.6px;height:4.6px;border-radius:50%;background:#e8607a"></div>
<div class="t sb" style="left:735.8px;top:607.6px;font-size:12px;color:#f2f2f2;transform:scaleX(0.993)">Record</div>

<div class="pill" style="left:794px;width:66px"></div>
<svg style="left:809.3px;top:606.5px" width="10" height="13"><path d="M2 5 V2.5 Q2 1 3.3 1 Q4.3 1 4.5 2 Q5 0.6 6.3 0.8 Q7.5 1 7.5 2.3 Q8.8 2 8.8 3.5 V9 Q8.8 12.3 5.3 12.3 Q1 12.3 1 9 V5.5 Q1 4.5 2 5Z" class="ln" stroke="#d8d8d8" stroke-width="1.1"/><path d="M6.5 7 Q4.5 8.5 4.3 10.5" class="ln" stroke="#d8d8d8" stroke-width="1"/></svg>
<div class="a" style="left:826.2px;top:605px;width:1px;height:16px;background:#6a6a6a"></div>
<svg style="left:832.7px;top:606.5px" width="15" height="14"><path d="M11.5 6.5 Q12.2 8 12.2 8.3 Q12.2 13 7 13 Q1.5 13 1.5 7.5 Q1.5 2 7 2 Q8 2 8.8 2.2" class="ln" stroke="#d8d8d8" stroke-width="1.2"/><circle cx="5" cy="6.3" r="0.9" fill="#d8d8d8"/><circle cx="9" cy="6.3" r="0.9" fill="#d8d8d8"/><path d="M4.5 9 Q7 11.3 9.5 9" class="ln" stroke="#d8d8d8" stroke-width="1.1"/><path d="M12 0.5 V4.5 M10 2.5 H14" stroke="#d8d8d8" stroke-width="1.1"/></svg>

<div class="pill" style="left:866px;width:31.7px;border-radius:50%"></div>
<svg style="left:877px;top:611.7px" width="10" height="3"><circle cx="1.1" cy="1.1" r="1" fill="#cfcfcf"/><circle cx="4.9" cy="1.1" r="1" fill="#cfcfcf"/><circle cx="8.7" cy="1.1" r="1" fill="#cfcfcf"/></svg>
<div class="a" style="left:904px;top:597.3px;width:31.4px;height:31.4px;border-radius:50%;background:#e0243a"></div>
<svg style="left:914px;top:608px" width="11" height="10.5"><path d="M0.7 0.7 L10.3 9.8 M10.3 0.7 L0.7 9.8" class="ln" stroke="#ffd8dc" stroke-width="1.2"/></svg>

<svg style="left:1049.2px;top:606.8px" width="14" height="13.5"><g fill="none" stroke="#d0d0d0" stroke-width="1.2"><rect x="0.7" y="0.7" width="5" height="5" rx="1.4"/><rect x="0.7" y="7.8" width="5" height="5" rx="1.4"/><rect x="7.9" y="7.8" width="5" height="5" rx="1.4"/><path d="M10.4 0.6 V5.8 M7.8 3.2 H13"/></g></svg>
<svg style="left:1086.7px;top:606.8px" width="15" height="14"><g class="ln" stroke="#d0d0d0" stroke-width="1.2"><circle cx="5.8" cy="3.5" r="2.8"/><path d="M7.8 8 Q7 7.5 5.8 7.5 Q0.8 7.5 0.8 11 Q0.8 12.8 3 12.8 H6.5"/></g><g stroke="#d0d0d0" stroke-width="0.9"><path d="M9 8.8 H14 M9 11 H14 M9 13.2 H14"/></g></svg>
<svg style="left:1124px;top:606px" width="15" height="14.5"><path d="M7.5 1 Q13.8 1 13.8 6.8 Q13.8 12.5 7.5 12.5 Q5.8 12.5 4.5 11.8 L1.2 13.2 L2.2 10.5 Q1.2 9 1.2 6.8 Q1.2 1 7.5 1Z" class="ln" stroke="#d0d0d0" stroke-width="1.2"/></svg>
<div class="a" style="left:1136.3px;top:598px;width:9.8px;height:9.8px;border-radius:50%;background:#5aaaf0;box-shadow:0 0 0 1px #0e0e0e"></div>
<svg style="left:1164px;top:612px" width="10" height="3"><circle cx="1.1" cy="1.1" r="1" fill="#c8c8c8"/><circle cx="4.8" cy="1.1" r="1" fill="#c8c8c8"/><circle cx="8.5" cy="1.1" r="1" fill="#c8c8c8"/></svg>

<!-- ===== TASKBAR ===== -->
<div class="a" style="left:0;top:637px;width:1200px;height:38px;background:linear-gradient(90deg,#e0e9ee 0,#e6eaea 150px,#ebe8e2 350px,#ede7de 600px,#ebe7e0 850px,#e4e8ea 960px,#dde7ee 1200px)"></div>
<div class="a" style="left:0;top:637px;width:1200px;height:1px;background:#e8e8e8"></div>
<!-- weather -->
<svg style="left:15px;top:651px" width="21" height="13"><path d="M4 12.5 Q0.5 12.5 0.5 9.5 Q0.5 6.5 4 6.5 Q5 2 10 2 Q15 2 16 6.5 Q20.5 6.5 20.5 9.5 Q20.5 12.5 17 12.5Z" fill="#c8d8ec" stroke="#a8bcd8" stroke-width="0.8"/></svg>
<div class="a" style="left:25.5px;top:643px;width:11px;height:11px;border-radius:50%;background:#d02a2a"></div>
<div class="t" style="left:29.3px;top:645px;font-size:7.5px;font-weight:700;color:#fff">1</div>
<!-- windows -->
<svg style="left:144px;top:647.2px" width="19" height="18.3"><defs><linearGradient id="wn" x1="0" y1="0" x2="1" y2="1"><stop offset="0" stop-color="#5ac8f8"/><stop offset="1" stop-color="#1a78d8"/></linearGradient></defs><g fill="url(#wn)"><rect x="0" y="0" width="8.8" height="8.6" rx="0.8"/><rect x="10" y="0" width="8.8" height="8.6" rx="0.8"/><rect x="0" y="9.7" width="8.8" height="8.6" rx="0.8"/><rect x="10" y="9.7" width="8.8" height="8.6" rx="0.8"/></g></svg>
<svg style="left:180.8px;top:648.4px" width="17" height="17"><circle cx="7" cy="7" r="5.8" fill="none" stroke="#1a1a1a" stroke-width="1.7"/><path d="M11.2 11.2 L15.8 15.8" stroke="#1a1a1a" stroke-width="1.9" stroke-linecap="round"/></svg>
<div class="a" style="left:213px;top:646.6px;width:19px;height:18.8px;border-radius:4px;background:#1bb51e"></div>
<svg style="left:215.5px;top:650px" width="14" height="12"><ellipse cx="7" cy="5" rx="6.5" ry="4.8" fill="#fff"/><path d="M6 9 L9 11.5 L8.5 9Z" fill="#fff"/><text x="7" y="6.3" font-size="3.6" font-weight="700" text-anchor="middle" fill="#1bb51e" font-family="Liberation Sans">LINE</text></svg>
<div class="a" style="left:220.7px;top:668.5px;width:4px;height:1.6px;border-radius:1px;background:#6a6a6a"></div>
<!-- chrome T -->
<svg style="left:247.3px;top:647px" width="19.2" height="19.2" viewBox="0 0 20 20"><circle cx="10" cy="10" r="9.5" fill="#db3a2e"/><path d="M10 10 L18.2 5.3 A9.5 9.5 0 0 1 10 19.5Z" fill="#f4c430"/><path d="M10 10 L10 19.5 A9.5 9.5 0 0 1 1.8 5.3Z" fill="#2a9a48"/><circle cx="10" cy="10" r="4.6" fill="#fff"/><circle cx="10" cy="10" r="3.6" fill="#2a76e8"/></svg>
<div class="a" style="left:258.5px;top:643.5px;width:11.5px;height:11.5px;border-radius:50%;background:#8a7a72"></div>
<div class="t" style="left:262px;top:645.7px;font-size:7.5px;font-weight:700;color:#f0f0f0">T</div>
<div class="a" style="left:255px;top:668.5px;width:4px;height:1.6px;border-radius:1px;background:#6a6a6a"></div>
<!-- files -->
<svg style="left:282px;top:648px" width="19" height="17"><path d="M0.5 2 Q0.5 0.5 2 0.5 H7 L9 2.5 H17 Q18.5 2.5 18.5 4 V15 Q18.5 16.5 17 16.5 H2 Q0.5 16.5 0.5 15Z" fill="#f0b800"/><rect x="0.5" y="5" width="18" height="11.5" rx="1.2" fill="#ffd54a"/><rect x="4" y="11.5" width="11" height="4" rx="0.8" fill="#1a6ad8"/></svg>
<div class="a" style="left:289.6px;top:668.5px;width:4px;height:1.6px;border-radius:1px;background:#6a6a6a"></div>
<!-- powerpoint -->
<svg style="left:315.5px;top:647px" width="19.3" height="19" viewBox="0 0 20 20"><circle cx="11" cy="10" r="8.5" fill="#ed6a48"/><path d="M11 1.5 A8.5 8.5 0 0 1 19.5 10 H11Z" fill="#ff8f6b"/><path d="M11 10 H19.5 A8.5 8.5 0 0 1 11 18.5Z" fill="#d35230"/><rect x="1" y="5" width="10" height="10" rx="1.2" fill="#c43e1c"/><text x="6" y="13.2" font-size="8" font-weight="700" text-anchor="middle" fill="#fff" font-family="Liberation Sans">P</text></svg>
<!-- creative cloud -->
<svg style="left:351.4px;top:647.5px" width="17" height="16.6"><defs><linearGradient id="cc" x1="0" y1="0" x2="1" y2="1"><stop offset="0" stop-color="#f53a8a"/><stop offset="0.5" stop-color="#e8483a"/><stop offset="1" stop-color="#f0c020"/></linearGradient></defs><rect width="17" height="16.6" rx="3.5" fill="url(#cc)"/><path d="M5 11.5 Q2.5 11.5 2.5 9 Q2.5 6.8 5 6.8 Q6.5 4.2 9.5 4.5 Q13 5 13.2 8 Q14.8 8.5 14.5 10 Q14.2 11.5 12.5 11.5Z" fill="none" stroke="#fff" stroke-width="1.2"/></svg>
<!-- vlc -->
<svg style="left:386.4px;top:647.5px" width="16" height="17"><path d="M6 1 H10 L14 14 H2Z" fill="#f08a10"/><path d="M4.8 5 H11.2 L12 7.6 H4Z M3.5 9.8 H12.5 L13.2 12 H2.8Z" fill="#fff"/><rect x="0.5" y="13.5" width="15" height="3.5" rx="1" fill="#e07810"/></svg>
<!-- blue app -->
<svg style="left:419.6px;top:647px" width="18" height="18.5"><circle cx="9.5" cy="9.2" r="8" fill="none" stroke="#2a70c8" stroke-width="2" stroke-dasharray="30 8"/><path d="M3 7 L10 4 L14 8 L9 15 L3 13Z" fill="#4a90e0"/><path d="M5 8 L12 6 L8 13Z" fill="#8ac0f0"/></svg>
<!-- webex -->
<div class="a" style="left:453.8px;top:647px;width:18.3px;height:18.3px;border-radius:4px;background:#111"></div>
<svg style="left:456px;top:651px" width="14" height="11" viewBox="0 0 14 11"><ellipse cx="4" cy="5.5" rx="2.5" ry="3.8" fill="none" stroke="#2ab8e8" stroke-width="2.3"/><path d="M12.2 2.8 Q11.2 1.6 10 1.6 Q7.4 1.6 7.4 5.5 Q7.4 9.4 10 9.4 Q12.6 9.4 12.6 5.5" fill="none" stroke="#3a70f0" stroke-width="2.3"/><path d="M10 1.6 Q12.4 1.6 12.6 4.2" fill="none" stroke="#40c870" stroke-width="2.3"/></svg>
<!-- snipping -->
<svg style="left:488.8px;top:647px" width="18.5" height="18.5"><path d="M1 1 H11 V9" fill="none" stroke="#d83838" stroke-width="1.6" stroke-dasharray="2 1.5"/><path d="M1 1 V10" fill="none" stroke="#d83838" stroke-width="1.6" stroke-dasharray="2 1.5"/><path d="M6 6 L11 12 L16 9 M11 12 L9 15" fill="none" stroke="#7a8aa0" stroke-width="1.3"/><circle cx="16.5" cy="9" r="1.8" fill="none" stroke="#1a88d8" stroke-width="1.3"/><circle cx="8.5" cy="16.5" r="1.8" fill="none" stroke="#1a88d8" stroke-width="1.3"/></svg>
<!-- word -->
<svg style="left:521.1px;top:647.5px" width="20" height="17"><rect x="5" y="0" width="15" height="17" rx="1.5" fill="#2b7cd3"/><rect x="5" y="5.5" width="15" height="5.7" fill="#185abd"/><rect x="5" y="11.2" width="15" height="5.8" rx="1.5" fill="#103f91"/><rect x="0" y="3.5" width="10" height="10" rx="1.2" fill="#185abd"/><text x="5" y="11.5" font-size="7.5" font-weight="700" text-anchor="middle" fill="#fff" font-family="Liberation Sans">W</text></svg>
<!-- red circle -->
<svg style="left:557px;top:647px" width="19" height="19"><circle cx="9.5" cy="9.5" r="9.2" fill="#c82828"/><circle cx="9.5" cy="9.5" r="6.5" fill="#3a1a1a" stroke="#f0e8e8" stroke-width="1.2"/><circle cx="9.5" cy="8" r="2.2" fill="#f0e8e8"/><path d="M5.5 14 Q9.5 9.5 13.5 14Z" fill="#f0e8e8"/></svg>
<!-- red square -->
<svg style="left:592.9px;top:647.7px" width="15" height="16.5"><rect width="15" height="16.5" rx="1" fill="#e03030"/><path d="M3.5 8 Q7.5 2.5 11.5 8 M5 9 Q7.5 5.5 10 9" fill="none" stroke="#fff" stroke-width="1"/><circle cx="7.5" cy="9.3" r="1.6" fill="#fff"/><path d="M4.5 14 Q7.5 9.8 10.5 14Z" fill="#fff"/></svg>
<!-- feather -->
<svg style="left:626px;top:647px" width="18" height="19"><path d="M1.5 18 Q3 8 17 0.5 Q15.5 11 1.5 18Z" fill="#a070d0"/><path d="M1.5 18 Q8 10 14 4" fill="none" stroke="#d8c0f0" stroke-width="0.8"/></svg>
<!-- zoom -->
<div class="a" style="left:659.4px;top:646.6px;width:20px;height:20px;border-radius:50%;background:#1a6af0"></div>
<div class="t" style="left:662.3px;top:653.6px;font-size:5px;font-weight:700;color:#fff">zoom</div>
<!-- excel -->
<svg style="left:693.5px;top:647.5px" width="20" height="17"><rect x="5" y="0" width="15" height="17" rx="1.5" fill="#21a366"/><rect x="5" y="5.5" width="15" height="5.7" fill="#107c41"/><rect x="12" y="0" width="8" height="5.5" fill="#33c481"/><rect x="5" y="11.2" width="15" height="5.8" rx="1.5" fill="#185c37"/><rect x="0" y="3.5" width="10" height="10" rx="1.2" fill="#107c41"/><text x="5" y="11.5" font-size="7.5" font-weight="700" text-anchor="middle" fill="#fff" font-family="Liberation Sans">X</text></svg>
<!-- ps -->
<div class="a" style="left:728.9px;top:647.5px;width:18px;height:17.5px;border-radius:3.5px;background:#001e36"></div>
<div class="t" style="left:731.3px;top:651.5px;font-size:9px;font-weight:700;color:#31a8ff">Ps</div>
<div class="a" style="left:736.4px;top:668.5px;width:4px;height:1.6px;border-radius:1px;background:#6a6a6a"></div>
<!-- active webex -->
<div class="a" style="left:758px;top:641px;width:26.2px;height:30px;border-radius:4px;background:#f6f4f0"></div>
<div class="a" style="left:763px;top:647px;width:19px;height:18.5px;border-radius:4px;background:#111"></div>
<svg style="left:765.5px;top:651px" width="14" height="11" viewBox="0 0 14 11"><ellipse cx="4" cy="5.5" rx="2.5" ry="3.8" fill="none" stroke="#2ab8e8" stroke-width="2.3"/><path d="M12.2 2.8 Q11.2 1.6 10 1.6 Q7.4 1.6 7.4 5.5 Q7.4 9.4 10 9.4 Q12.6 9.4 12.6 5.5" fill="none" stroke="#3a70f0" stroke-width="2.3"/><path d="M10 1.6 Q12.4 1.6 12.6 4.2" fill="none" stroke="#40c870" stroke-width="2.3"/></svg>
<div class="a" style="left:766.6px;top:668.2px;width:11.4px;height:2.2px;border-radius:1px;background:#3a7ab8"></div>
<!-- chrome IL -->
<svg style="left:797.3px;top:647px" width="19" height="19" viewBox="0 0 20 20"><circle cx="10" cy="10" r="9.5" fill="#db3a2e"/><path d="M10 10 L18.2 5.3 A9.5 9.5 0 0 1 10 19.5Z" fill="#f4c430"/><path d="M10 10 L10 19.5 A9.5 9.5 0 0 1 1.8 5.3Z" fill="#2a9a48"/><circle cx="10" cy="10" r="4.6" fill="#fff"/><circle cx="10" cy="10" r="3.6" fill="#2a76e8"/></svg>
<div class="a" style="left:807px;top:643px;width:12.5px;height:12.5px;border-radius:50%;background:#1e4a3a"></div>
<div class="t" style="left:809.5px;top:645.8px;font-size:6.8px;font-weight:700;color:#e8f0ec">IL</div>
<div class="a" style="left:804.3px;top:668.5px;width:4.5px;height:1.6px;border-radius:1px;background:#6a6a6a"></div>
<!-- terminal -->
<svg style="left:832.3px;top:648.5px" width="19" height="15"><rect width="19" height="15" rx="1.5" fill="#2e2e2e"/><rect width="19" height="2.5" rx="1" fill="#4a4a4a"/><path d="M3 5.5 L6 8 L3 10.5" fill="none" stroke="#fff" stroke-width="1.2"/><path d="M8 11 H13" stroke="#fff" stroke-width="1.2"/></svg>
<div class="a" style="left:839px;top:668.5px;width:4.5px;height:1.6px;border-radius:1px;background:#6a6a6a"></div>
<!-- photos -->
<svg style="left:868px;top:647.5px" width="16.5" height="17"><rect width="16.5" height="17" rx="2.5" fill="#3a98e8"/><path d="M0 13 L6 6 L11 11 L16.5 7 V17 H0Z" fill="#1a60c0"/><path d="M0 15 L6 8.5 L10 12.5 L16.5 9 V17 H0Z" fill="#60b8f8"/><circle cx="12.3" cy="3.8" r="1.8" fill="#fff"/></svg>
<div class="a" style="left:873.4px;top:668.5px;width:4.5px;height:1.6px;border-radius:1px;background:#6a6a6a"></div>
<!-- tray -->
<svg style="left:946px;top:653.8px" width="9.5" height="5.5"><path d="M0.6 4.9 L4.75 0.8 L8.9 4.9" class="ln" stroke="#1a1a1a" stroke-width="1.2"/></svg>
<div class="a" style="left:963.8px;top:641px;width:23.4px;height:29.6px;border-radius:4px;background:#f2f0ee"></div>
<svg style="left:969.3px;top:649px" width="13" height="13.5"><g class="ln" stroke="#1a1a1a" stroke-width="1.1"><rect x="4.3" y="0.6" width="4.4" height="7.2" rx="2.2"/><path d="M2 6 Q2 10 6.5 10 Q11 10 11 6 M6.5 10 V12.8 M0.8 0.8 L12.2 12.8"/></g></svg>
<div class="t" style="left:998.5px;top:650.5px;font-size:10px;color:#1a1a1a;transform:scaleX(1.055)">lnu</div>
<svg style="left:1027.8px;top:649px" width="14" height="14"><g class="ln" stroke="#1a1a1a" stroke-width="1.1"><path d="M8.5 0.8 H1.5 Q0.7 0.8 0.7 1.6 V9.3 Q0.7 10 1.5 10 H12 Q12.8 10 12.8 9.3 V7"/><path d="M5 13 H9 M6.8 10 V13"/><path d="M11.2 1 V6 M9.5 2.5 V1 M12.9 2.5 V1"/></g></svg>
<svg style="left:1047.3px;top:649.5px" width="13.5" height="13"><g class="ln" stroke="#1a1a1a" stroke-width="1.1"><path d="M0.7 4.5 H3 L6.5 1.3 V11.7 L3 8.5 H0.7Z"/><path d="M8.5 4.3 Q9.5 6.5 8.5 8.7 M10.5 2.5 Q12.5 6.5 10.5 10.5"/></g></svg>
<svg style="left:1065.7px;top:649px" width="14" height="14"><path d="M1 5 H11.5 Q12.5 5 12.5 6 V11 Q12.5 12 11.5 12 H1.5 Q0.7 12 0.7 11 V5.5" fill="none" stroke="#1a1a1a" stroke-width="1.1"/><rect x="1.5" y="6" width="10" height="5.3" fill="#1a1a1a"/><path d="M5 0.6 L3 5 M5 0.6 L7.5 5" stroke="#1a1a1a" stroke-width="1"/><rect x="12.5" y="7" width="1.3" height="3" fill="#1a1a1a"/></svg>
<div class="t" style="left:1112.3px;top:645.6px;font-size:9.5px;color:#1a1a1a;transform:scaleX(0.93)">14:37</div>
<div class="t" style="left:1091.7px;top:656.5px;font-size:9.5px;color:#1a1a1a;transform:scaleX(1.01)">21/8/2567</div>
<svg style="left:1141.5px;top:650.4px" width="11" height="12.5"><path d="M5.5 0.5 Q9.8 0.5 9.8 5 V8.5 L10.8 10.3 H0.2 L1.2 8.5 V5 Q1.2 0.5 5.5 0.5Z" fill="#1e4858"/><path d="M3.8 11 Q5.5 13.2 7.2 11Z" fill="#1e4858"/></svg>
<svg style="left:1165.4px;top:646.8px" width="20" height="19"><defs><linearGradient id="cp1" x1="0" y1="0" x2="1" y2="1"><stop offset="0" stop-color="#30b8f0"/><stop offset="0.5" stop-color="#6a6af0"/><stop offset="1" stop-color="#f060b0"/></linearGradient></defs><path d="M3 2 Q5 0 8 0.5 L13 1 Q16 1.5 16 5 L17 10 Q17.5 14 14 15 H6 Q2 15 1.5 11 L1 6 Q1 3.5 3 2Z" fill="url(#cp1)"/><path d="M4 9 Q6 4 10 6 L12 10 Q10 12 7 12Z" fill="#f8d040" opacity="0.7"/><rect x="7.5" y="12" width="12" height="7" rx="1.5" fill="#f0c820"/><text x="13.5" y="17.6" font-size="5.5" font-weight="700" text-anchor="middle" fill="#1a1a1a" font-family="Liberation Sans">PRE</text></svg>
</body></html>
